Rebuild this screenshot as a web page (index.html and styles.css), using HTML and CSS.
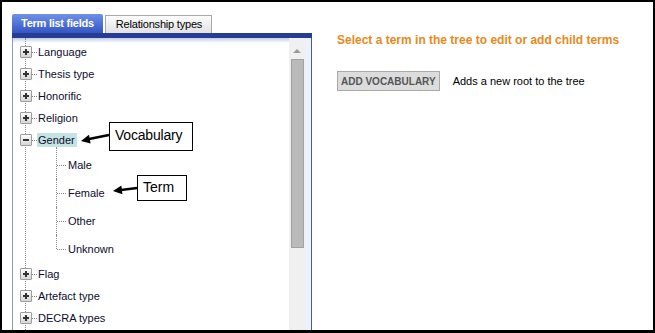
FILE: index.html
```html
<!DOCTYPE html>
<html lang="en">
<head>
    <meta charset="UTF-8">
    <title>Term list fields</title>
    <link rel="stylesheet" href="styles.css">
</head>
<body>
    <div class="frame">
        <div class="left">
            <div class="tabs">
                <div class="tab active">Term list fields</div>
                <div class="tab">Relationship types</div>
            </div>
            <div class="tab-bar"></div>
            <div class="panel">
                <div class="tree-area">
                    <ul class="tree">
                        <li class="row"><span class="toggle plus"></span><span class="link"></span><span class="label">Language</span></li>
                        <li class="row"><span class="toggle plus"></span><span class="link"></span><span class="label">Thesis type</span></li>
                        <li class="row"><span class="toggle plus"></span><span class="link"></span><span class="label">Honorific</span></li>
                        <li class="row"><span class="toggle plus"></span><span class="link"></span><span class="label">Religion</span></li>
                        <li>
                            <div class="row"><span class="toggle minus"></span><span class="link"></span><span class="label selected">Gender</span></div>
                            <ul class="children">
                                <li><span class="label">Male</span></li>
                                <li><span class="label">Female</span></li>
                                <li><span class="label">Other</span></li>
                                <li><span class="label">Unknown</span></li>
                            </ul>
                        </li>
                        <li class="row"><span class="toggle plus"></span><span class="link"></span><span class="label">Flag</span></li>
                        <li class="row"><span class="toggle plus"></span><span class="link"></span><span class="label">Artefact type</span></li>
                        <li class="row"><span class="toggle plus"></span><span class="link"></span><span class="label">DECRA types</span></li>
                    </ul>

                    <div class="callout vocab">Vocabulary</div>
                    <div class="callout term">Term</div>
                    <svg class="arrows" width="276" height="292" viewBox="0 0 276 292">
                        <line x1="96" y1="97" x2="76" y2="101" stroke="#000" stroke-width="2.5"/>
                        <polygon points="68,103 77.6,105.4 76,96.8" fill="#000"/>
                        <line x1="124" y1="150" x2="108" y2="152" stroke="#000" stroke-width="2.5"/>
                        <polygon points="100,153 109.4,156.2 108.4,147.6" fill="#000"/>
                    </svg>
                </div>
                <div class="scrollbar">
                    <span class="scroll-up"></span>
                    <div class="thumb"></div>
                </div>
            </div>
        </div>

        <div class="right">
            <h2 class="hint">Select a term in the tree to edit or add child terms</h2>
            <div class="actions">
                <button class="btn">ADD VOCABULARY</button>
                <span class="note">Adds a new root to the tree</span>
            </div>
        </div>
    </div>
</body>
</html>
```

FILE: styles.css
```css
body {
    margin: 0;
    padding: 0;
    font-family: "Liberation Sans", Arial, sans-serif;
    background-color: #000;
}
.frame {
    width: 655px;
    height: 333px;
    box-sizing: border-box;
    border: 2px solid #000;
    border-bottom-width: 3px;
    background-color: #fff;
    display: flex;
    align-items: flex-start;
    padding: 12px 0 0 10px;
    overflow: hidden;
}
.left {
    width: 300px;
    flex-shrink: 0;
    display: flex;
    flex-direction: column;
}
.tabs {
    display: flex;
    align-items: flex-end;
    gap: 2px;
    height: 19px;
    flex-shrink: 0;
}
.tab {
    height: 18px;
    box-sizing: border-box;
    padding: 0 9px 0 10px;
    border: 1px solid #a9a9a9;
    border-bottom: none;
    background: linear-gradient(#fcfcfc, #e2e2e2);
    font-size: 11px;
    letter-spacing: -0.2px;
    line-height: 17px;
    color: #000;
}
.tab.active {
    height: 19px;
    padding: 0 9px;
    border: none;
    border-radius: 2px 2px 0 0;
    background: linear-gradient(#6f90e8, #3456c2);
    color: #fff;
    font-weight: bold;
    letter-spacing: -0.25px;
    line-height: 19px;
}
.tab-bar {
    height: 5px;
    flex-shrink: 0;
    background-color: #263d95;
}
.panel {
    display: flex;
    height: 292px;
    flex-shrink: 0;
    border-left: 1px solid #8e9cb8;
    border-right: 1px solid #4c5b88;
    background-color: #ecf1fb;
    padding-right: 6px;
}
.tree-area {
    position: relative;
    flex: 1;
    background: linear-gradient(#c3cde2, #fff 5px);
}
.tree {
    list-style: none;
    margin: 0 0 0 12px;
    padding: 3px 0 0 0;
    border-left: 1px dotted #8a8a8a;
    height: 100%;
    box-sizing: border-box;
}
.row {
    display: flex;
    align-items: center;
    height: 22px;
}
.toggle {
    position: relative;
    width: 12px;
    height: 12px;
    box-sizing: border-box;
    margin-left: -6px;
    border: 1px solid #9c9c9c;
    border-radius: 1px;
    background: linear-gradient(#fdfdfd, #d6d6d6);
}
.toggle::before,
.toggle::after {
    content: "";
    position: absolute;
    background-color: #333;
}
.toggle::before {
    left: 2px;
    right: 2px;
    top: 4px;
    height: 2px;
}
.plus::after {
    top: 2px;
    bottom: 2px;
    left: 4px;
    width: 2px;
}
.minus::after {
    display: none;
}
.link {
    width: 5px;
    border-top: 1px dotted #8a8a8a;
}
.label {
    padding: 0 1px;
    font-size: 11px;
    color: #0c0c2c;
    line-height: 14px;
}
.label.selected {
    background-color: #c4e3e3;
    padding: 0 2px 0 1px;
}
.children {
    list-style: none;
    margin: 0 0 0 30px;
    padding: 0;
}
.children li {
    position: relative;
    height: 28px;
    display: flex;
    align-items: center;
    padding-left: 11px;
}
.children li::before {
    content: "";
    position: absolute;
    left: 0;
    top: 0;
    bottom: 0;
    border-left: 1px dotted #8a8a8a;
}
.children li:first-child::before {
    top: -4px;
}
.children li:last-child::before {
    bottom: 14px;
}
.children li::after {
    content: "";
    position: absolute;
    left: 1px;
    top: 14px;
    width: 9px;
    border-top: 1px dotted #8a8a8a;
}
.callout {
    position: absolute;
    box-sizing: border-box;
    border: 1px solid #000;
    background-color: #fff;
    font-size: 14px;
    color: #000;
    padding-left: 5px;
}
.callout.vocab {
    left: 96px;
    top: 84px;
    width: 84px;
    height: 29px;
    line-height: 24px;
    letter-spacing: -0.2px;
}
.callout.term {
    left: 124px;
    top: 137px;
    width: 50px;
    height: 26px;
    line-height: 22px;
}
.arrows {
    position: absolute;
    left: 0;
    top: 0;
    pointer-events: none;
}
.scrollbar {
    width: 16px;
    background-color: #f0f0f0;
    display: flex;
    flex-direction: column;
    align-items: center;
}
.scroll-up {
    margin-top: 11px;
    width: 0;
    height: 0;
    border-left: 4px solid transparent;
    border-right: 4px solid transparent;
    border-bottom: 4px solid #9a9a9a;
}
.thumb {
    margin-top: 6px;
    width: 13px;
    height: 189px;
    box-sizing: border-box;
    margin-left: 1px;
    border: 1px solid #a2a2a2;
    background-color: #bababa;
}
.right {
    padding: 19px 0 0 25px;
}
.hint {
    margin: 0;
    font-size: 12px;
    font-weight: bold;
    line-height: 14px;
    color: #e8891c;
}
.actions {
    display: flex;
    align-items: center;
    gap: 13px;
    margin-top: 24px;
}
.btn {
    height: 20px;
    padding: 0 3px;
    border: 1px solid #a9a9a9;
    background-color: #dcdcdc;
    color: #555;
    font-family: "Liberation Sans", Arial, sans-serif;
    font-size: 10px;
    font-weight: bold;
}
.note {
    font-size: 11px;
    color: #000;
}
```
